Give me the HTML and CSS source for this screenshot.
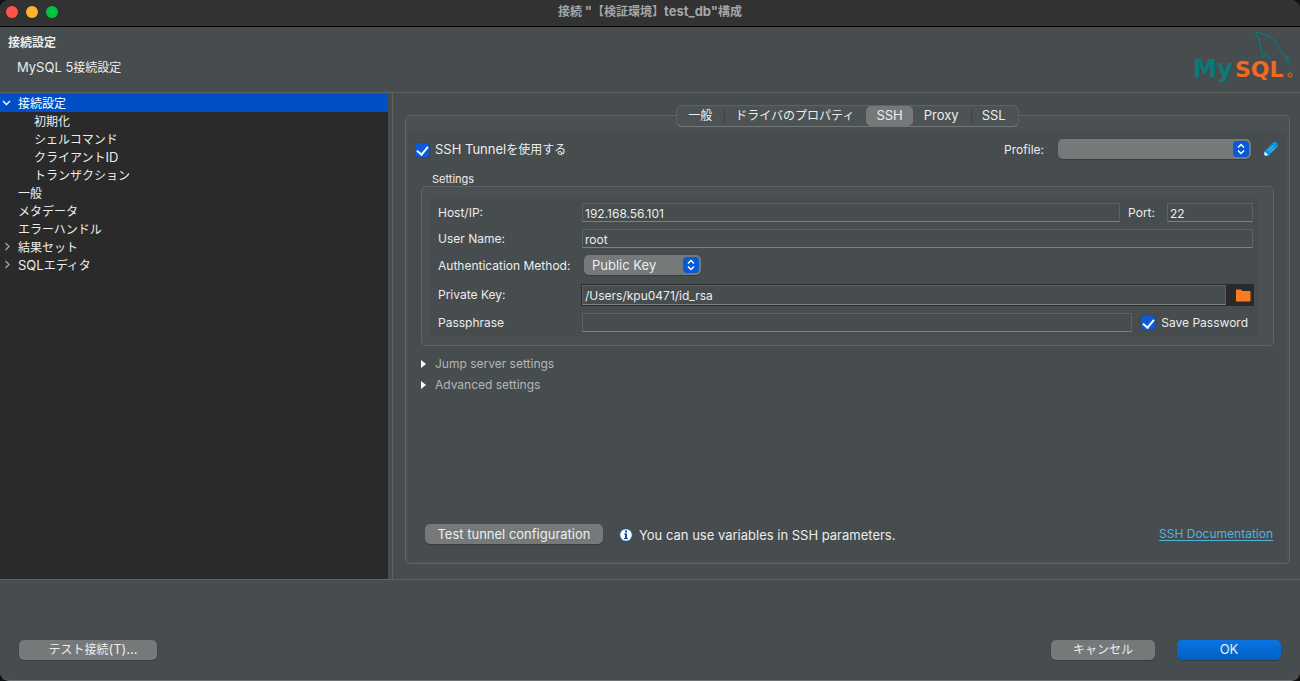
FILE: index.html
```html
<!DOCTYPE html>
<html lang="ja">
<head>
<meta charset="utf-8">
<title>接続 "【検証環境】test_db"構成</title>
<link rel="stylesheet" href="styles.css">
</head>
<body>
<div class="window">
  <div class="titlebar">
    <div class="lights">
      <button class="light red" aria-label="閉じる"></button>
      <button class="light yellow" aria-label="しまう"></button>
      <button class="light green" aria-label="拡大"></button>
    </div>
    <div class="window-title">接続 <span class="latin">"</span>【検証環境】<span class="latin">test_db"</span>構成</div>
  </div>

  <header class="header">
    <div>
      <h1 class="heading">接続設定</h1>
      <p class="subheading"><span class="latin">MySQL 5</span>接続設定</p>
    </div>
    <svg class="logo" width="98" height="54" viewBox="0 0 98 54" role="img" aria-label="MySQL">
      <g class="dolphin">
        <path d="M62 4.500C60 2.500 60.500 1 63.500 1.500C66 1.500 67 3 69 3.500C77 5 82 12 85 19C87 23 90 24 94 27C92 28 89 27.500 90 29C92 30 94 31 95 34M62 4.500C65 8 64 11 65.500 14C65 18 67 22 68.500 26C70 26 70 23 71 21.500C73 24 74 26 76 27.500"/>
        <path d="M69 7.500l1 1.200"/>
      </g>
      <text class="logo-my" x="-2" y="46">My</text>
      <text class="logo-sql" x="40" y="46">SQL</text>
      <circle cx="95" cy="44" r="2" fill="none" stroke="#f26a21"/>
    </svg>
  </header>

  <main class="main">
    <nav class="sidebar">
      <ul class="tree">
        <li class="item selected"><svg class="chevron" width="10" height="10" viewBox="0 0 10 10"><path d="M1 3L4.500 6.500L8 3"/></svg>接続設定</li>
        <li class="item child">初期化</li>
        <li class="item child">シェルコマンド</li>
        <li class="item child">クライアント<span class="latin">ID</span></li>
        <li class="item child">トランザクション</li>
        <li class="item">一般</li>
        <li class="item">メタデータ</li>
        <li class="item">エラーハンドル</li>
        <li class="item"><svg class="chevron dim" width="10" height="10" viewBox="0 0 10 10"><path d="M3.500 1L7 4.500L3.500 8"/></svg>結果セット</li>
        <li class="item"><svg class="chevron dim" width="10" height="10" viewBox="0 0 10 10"><path d="M3.500 1L7 4.500L3.500 8"/></svg><span class="latin">SQL</span>エディタ</li>
      </ul>
    </nav>

    <section class="content">
      <div class="tabs" role="tablist">
        <button class="tab" role="tab">一般</button>
        <button class="tab divided" role="tab">ドライバのプロパティ</button>
        <button class="tab active" role="tab" aria-selected="true"><span class="latin">SSH</span></button>
        <button class="tab" role="tab"><span class="latin">Proxy</span></button>
        <button class="tab divided" role="tab"><span class="latin">SSL</span></button>
      </div>

      <div class="panel">
        <div class="pane">
          <div class="topline">
            <label class="check"><input type="checkbox" checked><span><span class="latin">SSH Tunnel</span>を使用する</span></label>
            <div class="profile">
              <label for="profile">Profile:</label>
              <span class="select wide">
                <select id="profile"><option></option></select>
                <svg class="arrows" width="16" height="16" viewBox="0 0 16 16"><path d="M5 6.500L8 3.500L11 6.500M5 9.500L8 12.500L11 9.500"/></svg>
              </span>
              <button class="icon-button" aria-label="Edit profile">
                <svg width="14" height="14" viewBox="0 0 14 14"><path d="M0 14V9.500L9.500 0H12L14 2V4.500L4.500 14Z" fill="#0a93d6"/><path d="M4 9L9 4M6 10.500L11 5.500" stroke="#5cc8f5" fill="none"/><path d="M1 10.500L3.500 13H1Z" fill="#fff" stroke="#fff"/></svg>
              </button>
            </div>
          </div>

          <h2 class="group-title">Settings</h2>
          <div class="group">
            <form class="form">
              <div class="row">
                <label class="name" for="host">Host/IP:</label>
                <input class="field" id="host" type="text" value="192.168.56.101">
                <label class="port-name" for="port">Port:</label>
                <input class="field port" id="port" type="text" value="22">
              </div>
              <div class="row">
                <label class="name" for="user">User Name:</label>
                <input class="field" id="user" type="text" value="root">
              </div>
              <div class="row auth">
                <label class="name" for="auth">Authentication Method:</label>
                <span class="select">
                  <select id="auth"><option>Public Key</option></select>
                  <svg class="arrows" width="16" height="16" viewBox="0 0 16 16"><path d="M5 6.500L8 3.500L11 6.500M5 9.500L8 12.500L11 9.500"/></svg>
                </span>
              </div>
              <div class="row">
                <label class="name" for="key">Private Key:</label>
                <div class="file">
                  <input class="field" id="key" type="text" value="/Users/kpu0471/id_rsa">
                  <button class="browse" type="button" aria-label="Browse">
                    <svg width="15" height="13" viewBox="0 0 15 13"><path d="M0 1.500Q0 .5 1 .5H5L6.500 2H13.500Q14.500 2 14.500 3V11.500Q14.500 12.500 13.500 12.500H1Q0 12.500 0 11.500Z" fill="#fb7b24"/></svg>
                  </button>
                </div>
              </div>
              <div class="row">
                <label class="name" for="pass">Passphrase</label>
                <input class="field" id="pass" type="password">
                <label class="check save"><input type="checkbox" checked>Save Password</label>
              </div>
            </form>
          </div>

          <button class="expander"><svg width="5" height="8" viewBox="0 0 5 8"><path d="M0 0L5 4L0 8Z" fill="#fff"/></svg>Jump server settings</button>
          <button class="expander"><svg width="5" height="8" viewBox="0 0 5 8"><path d="M0 0L5 4L0 8Z" fill="#fff"/></svg>Advanced settings</button>

          <div class="bottomline">
            <button class="button test-tunnel">Test tunnel configuration</button>
            <p class="hint">
              <svg width="14" height="14" viewBox="0 0 14 14"><circle cx="7" cy="7" r="6.300" fill="#fff" stroke="#0b4f8f"/><path d="M6 2.500H8V4.500H6ZM5 5.500H8V10H9V11H5V10H6V6.500H5Z" fill="#0b4f8f"/></svg>
              You can use variables in SSH parameters.
            </p>
            <a class="link" href="#">SSH Documentation</a>
          </div>
        </div>
      </div>
    </section>
  </main>

  <footer class="footer">
    <button class="button test">テスト接続<span class="latin">(T)...</span></button>
    <button class="button">キャンセル</button>
    <button class="button primary"><span class="latin">OK</span></button>
  </footer>
</div>
</body>
</html>
```
FILE: styles.css
```css
* {
  box-sizing: border-box;
}

body {
  margin: 0;
  background: #111;
  color: #eceded;
  font: 12px/18px Inter, "Noto Sans CJK JP", sans-serif;
}

h1, h2, p, ul {
  margin: 0;
  padding: 0;
  font-size: inherit;
}

button, input, select {
  margin: 0;
  padding: 0;
  border: 0;
  background: none;
  color: inherit;
  font: inherit;
}

svg {
  flex: none;
}

.latin {
  font-size: 13px;
  line-height: 1;
}

.window {
  display: flex;
  flex-direction: column;
  min-height: 100vh;
  border-bottom: 1px solid #6d7172;
  border-radius: 9px;
  background: #474c4e;
  overflow: hidden;
}

.titlebar {
  display: grid;
  grid-template-columns: 1fr auto 1fr;
  align-items: center;
  height: 27px;
  padding: 0 6px 2px;
  border-bottom: 1px solid #000;
  background: #323232;
}

.lights {
  display: flex;
  gap: 8px;
}

.light {
  width: 12px;
  height: 12px;
  border-radius: 50%;
}

.red { background: #ff544d; }
.yellow { background: #ffb32f; }
.green { background: #00c63f; }

.window-title {
  color: #a5a5a5;
  font-weight: 700;
}

.header {
  display: flex;
  justify-content: space-between;
  height: 66px;
  padding: 4px 7px 0 8px;
  border-bottom: 1px solid #5f6362;
}

.heading {
  margin-top: 3px;
  font-weight: 700;
}

.subheading {
  margin: 7px 0 0 9px;
}

.dolphin {
  fill: none;
  stroke: #087b78;
  stroke-width: 1.2;
}

.logo {
  overflow: visible;
  font: 700 22px "DejaVu Sans", sans-serif;
}

.logo-my {
  fill: #087b78;
  font-size: 24px;
}

.logo-sql {
  fill: #f26a21;
}

.main {
  display: grid;
  grid-template-columns: 388px 1fr;
  gap: 4px;
  flex: 1;
  border-bottom: 1px solid #5f6362;
}

.sidebar {
  margin-top: 1px;
  background: #2a2a2a;
}

.tree {
  list-style: none;
}

.item {
  position: relative;
  height: 18px;
  padding: 1px 0 0 18px;
}

.child {
  padding-left: 34px;
}

.selected {
  background: #004fc7;
  color: #fff;
}

.chevron {
  position: absolute;
  top: 4px;
  left: 2px;
  fill: none;
  stroke: #fff;
  stroke-width: 1.4;
}

.dim {
  stroke: #a0a0a0;
}

.content {
  display: flex;
  flex-direction: column;
  padding: 12px 10px 15px 12px;
  border-left: 1px solid #5f6362;
}

.tabs {
  z-index: 1;
  display: flex;
  align-self: center;
  height: 22px;
  margin-bottom: -12px;
  border: 1px solid #5e6263;
  border-bottom-color: #747879;
  border-radius: 6px;
  background: #4d5254;
}

.tab {
  position: relative;
  padding: 0 12px 1px 11px;
}

.tab.divided::before {
  content: "";
  position: absolute;
  top: 4px;
  left: 0;
  width: 1px;
  height: 12px;
  background: #3c4142;
}

.tab.active {
  padding: 0 10px 1px;
  border-radius: 5px;
  background: #75797a;
}

.panel {
  display: flex;
  flex: 1;
  padding: 16px 2px 2px;
  border: 1px solid #606566;
  border-radius: 5px;
  background: #4b5052;
}

.pane {
  display: flex;
  flex: 1;
  flex-direction: column;
  padding: 6px 13px 17px;
  background: #474c4e;
}

.topline {
  display: flex;
  align-items: center;
  justify-content: space-between;
  height: 22px;
  margin: 0 -4px 0 -6px;
}

.topline label {
  padding-top: 1px;
}

.check {
  display: flex;
  align-items: center;
  gap: 6px;
}

.check input {
  width: 14px;
  height: 14px;
  appearance: none;
  border-radius: 3px;
  background: #0a5cdb;
  box-shadow: 0 0 1px #222;
}

.check input:checked::before {
  content: "";
  display: block;
  width: 5px;
  height: 9px;
  margin: 1px 0 0 4px;
  border: solid #fff;
  border-width: 0 2px 2px 0;
  transform: rotate(40deg);
}

.profile {
  display: flex;
  align-items: center;
  gap: 14px;
}

.select {
  position: relative;
  display: flex;
  width: 117px;
  font-size: 13px;
}

.select.wide {
  width: 193px;
}

.profile .icon-button {
  margin-left: -1px;
}

.select select {
  width: 100%;
  height: 20px;
  padding: 0 24px 1px 8px;
  appearance: none;
  border-radius: 5px;
  background: #75797a;
  box-shadow: 0 1px 1px #383c3d;
}

.arrows {
  position: absolute;
  top: 2px;
  right: 2px;
  border-radius: 4px;
  background: #075ad6;
  fill: none;
  stroke: #fff;
  stroke-width: 1.5;
  pointer-events: none;
}

.icon-button {
  display: flex;
}

.group-title {
  margin: 12px 0 0 11px;
  font-size: 11px;
  font-weight: 400;
  line-height: 14px;
}

.group {
  padding: 10px 14px 8px 9px;
  border: 1px solid #5f6465;
  border-radius: 5px;
  background: #4b5052;
}

.form {
  display: flex;
  flex-direction: column;
  gap: 7px;
  padding: 6px 6px 5px 7px;
  background: #474c4e;
}

.row {
  display: flex;
  align-items: center;
}

.auth {
  align-items: flex-start;
  min-height: 22px;
}

.auth .name {
  padding-top: 2px;
}

.name {
  flex: none;
  width: 144px;
}

.field {
  flex: 1;
  min-width: 0;
  height: 19px;
  padding: 1px 2px 0;
  border: 1px solid #5d6162;
  border-bottom-color: #7d8081;
}

.port-name {
  padding: 0 12px 0 8px;
}

.port {
  flex: none;
  width: 86px;
}

.auth .select {
  margin-left: 2px;
}

.file {
  display: flex;
  flex: 1;
  margin: 0 -1px;
  padding: 1px;
  background: #2a2a2a;
}

.file .field {
  height: 20px;
  background: #474c4e;
}

.browse {
  display: flex;
  align-items: center;
  justify-content: center;
  width: 27px;
  padding-left: 7px;
}

.save {
  padding: 0 5px 0 9px;
}

.expander {
  display: flex;
  align-items: center;
  gap: 9px;
  width: max-content;
  margin-top: 3px;
  color: #b5b7b8;
}

.group + .expander {
  margin-top: 9px;
}

.bottomline {
  display: flex;
  align-items: center;
  margin: auto 1px 0 4px;
}

.button {
  width: 104px;
  height: 20px;
  padding-bottom: 1px;
  border-radius: 5px;
  background: #75797a;
  box-shadow: 0 1px 1px #383c3d;
}

.test-tunnel {
  width: 178px;
  font-size: 13px;
}

.hint {
  display: flex;
  align-items: center;
  gap: 6px;
  margin: 2px 0 0 16px;
  font-size: 13px;
}

.link {
  margin-left: auto;
  color: #4fb4dc;
  text-underline-offset: 2px;
}

.footer {
  display: flex;
  gap: 22px;
  height: 100px;
  padding: 60px 19px 0;
}

.test {
  width: 138px;
  margin-right: auto;
  padding-left: 10px;
}

.primary {
  background: linear-gradient(#0a74e2, #0060c6);
}
```
